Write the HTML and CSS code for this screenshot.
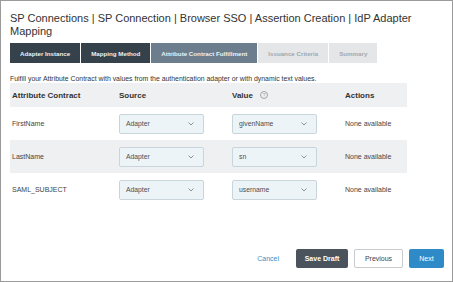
FILE: index.html
```html
<!DOCTYPE html>
<html lang="en">
<head>
    <meta charset="UTF-8">
    <title>IdP Adapter Mapping</title>
    <link rel="stylesheet" href="styles.css">
</head>
<body>
    <div class="page">
        <h1 class="title">SP Connections | SP Connection | Browser SSO | Assertion Creation | IdP Adapter Mapping</h1>

        <div class="tabs">
            <div class="tab done">Adapter Instance</div>
            <div class="tab done">Mapping Method</div>
            <div class="tab active">Attribute Contract Fulfillment</div>
            <div class="tab">Issuance Criteria</div>
            <div class="tab">Summary</div>
        </div>

        <p class="intro">Fulfill your Attribute Contract with values from the authentication adapter or with dynamic text values.</p>

        <table class="mapping">
            <thead>
                <tr>
                    <th class="col-name">Attribute Contract</th>
                    <th class="col-source">Source</th>
                    <th class="col-value">Value <span class="help">?</span></th>
                    <th class="col-actions">Actions</th>
                </tr>
            </thead>
            <tbody>
                <tr>
                    <td>FirstName</td>
                    <td><div class="select"><span>Adapter</span><svg class="chevron" width="6" height="4" viewBox="0 0 6 4"><polyline points="0.5,0.5 3,3 5.5,0.5"/></svg></div></td>
                    <td><div class="select"><span>givenName</span><svg class="chevron" width="6" height="4" viewBox="0 0 6 4"><polyline points="0.5,0.5 3,3 5.5,0.5"/></svg></div></td>
                    <td>None available</td>
                </tr>
                <tr class="alt">
                    <td>LastName</td>
                    <td><div class="select"><span>Adapter</span><svg class="chevron" width="6" height="4" viewBox="0 0 6 4"><polyline points="0.5,0.5 3,3 5.5,0.5"/></svg></div></td>
                    <td><div class="select"><span>sn</span><svg class="chevron" width="6" height="4" viewBox="0 0 6 4"><polyline points="0.5,0.5 3,3 5.5,0.5"/></svg></div></td>
                    <td>None available</td>
                </tr>
                <tr>
                    <td>SAML_SUBJECT</td>
                    <td><div class="select"><span>Adapter</span><svg class="chevron" width="6" height="4" viewBox="0 0 6 4"><polyline points="0.5,0.5 3,3 5.5,0.5"/></svg></div></td>
                    <td><div class="select"><span>username</span><svg class="chevron" width="6" height="4" viewBox="0 0 6 4"><polyline points="0.5,0.5 3,3 5.5,0.5"/></svg></div></td>
                    <td>None available</td>
                </tr>
            </tbody>
        </table>

        <div class="actions">
            <a class="link">Cancel</a>
            <button class="btn btn-dark">Save Draft</button>
            <button class="btn btn-light">Previous</button>
            <button class="btn btn-primary">Next</button>
        </div>
    </div>
</body>
</html>
```

FILE: styles.css
```css
body {
    margin: 0;
    font-family: 'Liberation Sans', Arial, sans-serif;
    color: #3c3c3c;
    background: #fff;
}

.page {
    height: 282px;
    box-sizing: border-box;
    border: 1px solid #9b9b9b;
    padding: 11px 8px 13px 9px;
    display: flex;
    flex-direction: column;
}

.title {
    margin: 0;
    font-size: 11px;
    font-weight: 400;
    line-height: 13px;
    color: #333;
}

.tabs {
    display: flex;
    gap: 1px;
    margin-top: 5px;
}

.tab {
    height: 20px;
    padding: 0 10px;
    display: flex;
    align-items: center;
    font-size: 6.2px;
    font-weight: 700;
    background: #e4e6e8;
    color: #a3a8ad;
}

.tab.done {
    background: #35424b;
    color: #eef1f3;
}

.tab.active {
    background: #6c7e8d;
    color: #eef1f3;
}

.intro {
    margin: 11px 0 0;
    font-size: 6.9px;
    line-height: 9px;
    color: #333;
}

.mapping {
    width: 397px;
    border-collapse: collapse;
    table-layout: fixed;
}

.mapping th,
.mapping td {
    padding: 0 0 0 2px;
    text-align: left;
}

.mapping th {
    height: 24px;
    background: #eff0f2;
    font-size: 8px;
    font-weight: 700;
    color: #333;
}

.mapping td {
    height: 33px;
    font-size: 7px;
    color: #444;
}

.mapping tr.alt td {
    background: #eff0f2;
}

.col-name {
    width: 105px;
}

.col-source,
.col-value {
    width: 111px;
}

.help {
    display: inline-block;
    width: 6px;
    height: 6px;
    margin-left: 5px;
    border: 1px solid #a5a5a5;
    border-radius: 50%;
    font-size: 5px;
    line-height: 6px;
    text-align: center;
    font-weight: 400;
    color: #a5a5a5;
    vertical-align: 1px;
}

.select {
    width: 85px;
    height: 20px;
    box-sizing: border-box;
    padding: 0 6px;
    display: flex;
    align-items: center;
    justify-content: space-between;
    background: #edf4f8;
    border: 1px solid #c9d5dd;
    border-radius: 2px;
    font-size: 6.8px;
    color: #4a4f55;
}

.chevron {
    margin-right: 3px;
}

.chevron polyline {
    fill: none;
    stroke: #808890;
    stroke-width: 0.9;
}

.actions {
    margin-top: auto;
    display: flex;
    justify-content: flex-end;
    align-items: center;
    gap: 6px;
}

.link {
    margin-right: 11px;
    font-size: 7px;
    color: #3b8fc8;
}

.btn {
    height: 19px;
    padding: 0 10px;
    border: 1px solid transparent;
    border-radius: 2px;
    font-family: 'Liberation Sans', Arial, sans-serif;
    font-size: 7px;
}

.btn-dark {
    width: 52px;
    padding: 0;
    background: #4b545c;
    color: #fff;
    font-weight: 700;
}

.btn-light {
    width: 49px;
    padding: 0;
    background: #fff;
    border-color: #c8cbce;
    color: #444;
}

.btn-primary {
    width: 35px;
    padding: 0;
    background: #2e8bc8;
    color: #fff;
}
```
